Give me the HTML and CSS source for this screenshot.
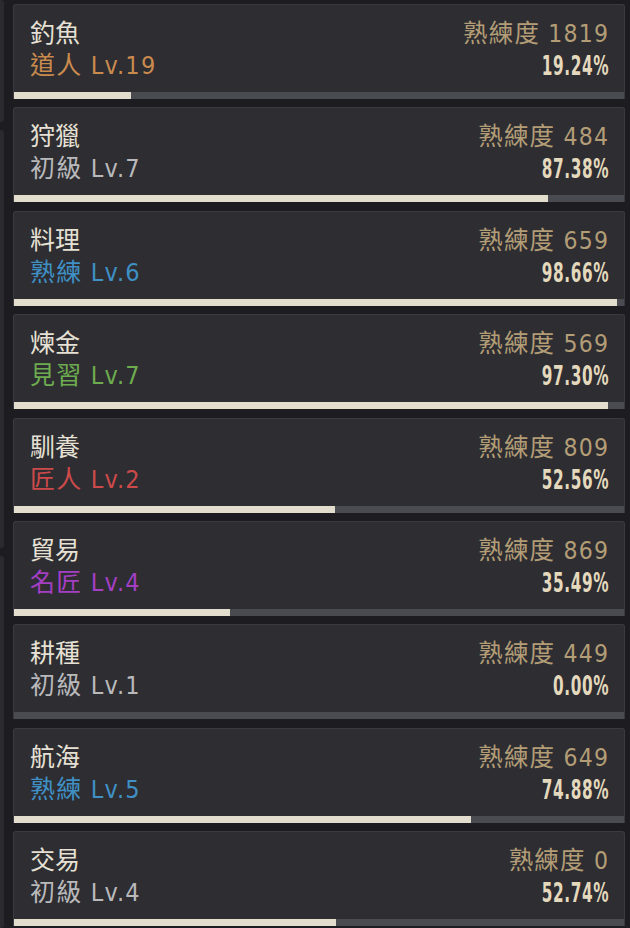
FILE: index.html
```html
<!DOCTYPE html>
<html lang="zh-Hant">
<head>
<meta charset="utf-8">
<title>生活技能</title>
<link rel="stylesheet" href="styles.css">
</head>
<body>
<div class="page">
  <div class="side">
    <div class="side-seg s1"></div>
    <div class="side-seg s2"></div>
    <div class="side-seg s3"></div>
  </div>
  <div class="list">
    <div class="card">
      <div class="info">
        <div class="left"><div class="name">釣魚</div><div class="rank orange">道人 Lv.19</div></div>
        <div class="right"><div class="exp">熟練度 1819</div><div class="pct"><span class="pv">19.24%</span></div></div>
      </div>
      <div class="bar"><div class="fill" style="width:19.24%"></div></div>
    </div>
    <div class="card">
      <div class="info">
        <div class="left"><div class="name">狩獵</div><div class="rank gray">初級 Lv.7</div></div>
        <div class="right"><div class="exp">熟練度 484</div><div class="pct"><span class="pv">87.38%</span></div></div>
      </div>
      <div class="bar"><div class="fill" style="width:87.38%"></div></div>
    </div>
    <div class="card">
      <div class="info">
        <div class="left"><div class="name">料理</div><div class="rank blue">熟練 Lv.6</div></div>
        <div class="right"><div class="exp">熟練度 659</div><div class="pct"><span class="pv">98.66%</span></div></div>
      </div>
      <div class="bar"><div class="fill" style="width:98.66%"></div></div>
    </div>
    <div class="card">
      <div class="info">
        <div class="left"><div class="name">煉金</div><div class="rank green">見習 Lv.7</div></div>
        <div class="right"><div class="exp">熟練度 569</div><div class="pct"><span class="pv">97.30%</span></div></div>
      </div>
      <div class="bar"><div class="fill" style="width:97.30%"></div></div>
    </div>
    <div class="card">
      <div class="info">
        <div class="left"><div class="name">馴養</div><div class="rank red">匠人 Lv.2</div></div>
        <div class="right"><div class="exp">熟練度 809</div><div class="pct"><span class="pv">52.56%</span></div></div>
      </div>
      <div class="bar"><div class="fill" style="width:52.56%"></div></div>
    </div>
    <div class="card">
      <div class="info">
        <div class="left"><div class="name">貿易</div><div class="rank purple">名匠 Lv.4</div></div>
        <div class="right"><div class="exp">熟練度 869</div><div class="pct"><span class="pv">35.49%</span></div></div>
      </div>
      <div class="bar"><div class="fill" style="width:35.49%"></div></div>
    </div>
    <div class="card">
      <div class="info">
        <div class="left"><div class="name">耕種</div><div class="rank gray">初級 Lv.1</div></div>
        <div class="right"><div class="exp">熟練度 449</div><div class="pct"><span class="pv">0.00%</span></div></div>
      </div>
      <div class="bar"><div class="fill" style="width:0%"></div></div>
    </div>
    <div class="card">
      <div class="info">
        <div class="left"><div class="name">航海</div><div class="rank blue">熟練 Lv.5</div></div>
        <div class="right"><div class="exp">熟練度 649</div><div class="pct"><span class="pv">74.88%</span></div></div>
      </div>
      <div class="bar"><div class="fill" style="width:74.88%"></div></div>
    </div>
    <div class="card">
      <div class="info">
        <div class="left"><div class="name">交易</div><div class="rank gray">初級 Lv.4</div></div>
        <div class="right"><div class="exp">熟練度 0</div><div class="pct"><span class="pv">52.74%</span></div></div>
      </div>
      <div class="bar"><div class="fill" style="width:52.74%"></div></div>
    </div>
  </div>
</div>
</body>
</html>
```
FILE: styles.css
```css
html, body {
  margin: 0;
  padding: 0;
  background: #1d1d21;
}
body {
  width: 630px;
  height: 928px;
  overflow: hidden;
  font-family: "DejaVu Sans Condensed", "Noto Sans CJK TC", sans-serif;
}
.page {
  display: flex;
  height: 928px;
}
.side {
  width: 4px;
  display: flex;
  flex-direction: column;
  gap: 8px;
  margin-right: 9px;
}
.side-seg {
  background: #2a2a2f;
  border-radius: 0 3px 3px 0;
}
.s1 { height: 122px; }
.s2 { height: 418px; }
.s3 { flex: 1; }
.list {
  width: 612px;
  padding-top: 4px;
  display: flex;
  flex-direction: column;
  gap: 8.4px;
}
.card {
  height: 95px;
  box-sizing: border-box;
  background: #2d2d32;
  border: 1px solid #3a3a40;
  border-bottom: none;
  border-radius: 3px 3px 0 0;
  display: flex;
  flex-direction: column;
  overflow: hidden;
}
.info {
  flex: 1;
  display: flex;
  justify-content: space-between;
  padding: 13px 16px 0 16px;
}
.left, .right {
  display: flex;
  flex-direction: column;
}
.right { align-items: flex-end; }
.name, .rank, .exp, .pct {
  font-size: 25px;
  line-height: 32px;
  white-space: nowrap;
}
.rank { letter-spacing: 1.2px; }
.exp { letter-spacing: 1.2px; margin-right: -1.2px; font-size: 24.5px; }
.name { color: #e6e1d4; }
.exp { color: #b39d76; }
.pct { color: #e4d9bd; }
.pv {
  display: inline-block;
  font-size: 27px;
  font-weight: bold;
  letter-spacing: 1px;
  margin-right: -1px;
  transform: scaleX(0.63);
  transform-origin: right center;
}
.orange { color: #c98a4e; }
.gray { color: #b9b9bb; }
.blue { color: #3f90c4; }
.green { color: #6dab4f; }
.red { color: #cc4a4a; }
.purple { color: #a43fc4; }
.bar {
  height: 7px;
  background: #4a4a51;
  margin: 0 -1px;
}
.fill {
  height: 100%;
  background: #e2ddcc;
}
```
